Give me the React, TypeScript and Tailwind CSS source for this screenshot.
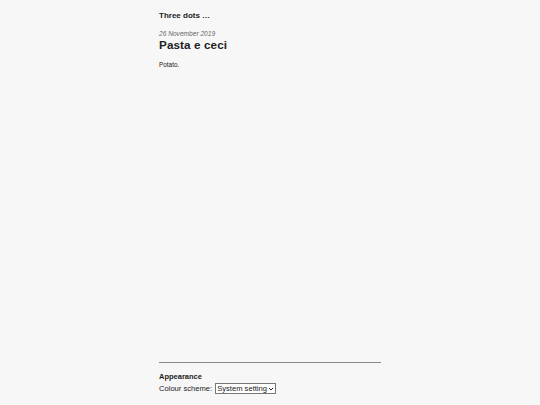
import React from 'react';

export default function App() {
  return (
    <div className="min-h-[405px] h-[405px] bg-[#f7f7f7] text-[#222] flex flex-col items-center font-['Liberation_Sans',Arial,sans-serif]">
      <div className="w-[222px] flex flex-col flex-1">
        <header className="pt-[10px]">
          <h1 className="text-[8px] leading-[12px] font-bold text-[#222]">Three dots …</h1>
        </header>

        <main className="flex-1 pt-[7px]">
          <p className="text-[6.6px] leading-[9px] italic text-[#666]">26 November 2019</p>
          <h2 className="text-[11.7px] leading-[14px] font-bold tracking-[0.1px] text-[#222]">Pasta e ceci</h2>
          <p className="text-[6.4px] leading-[9px] mt-[8px] text-[#222]">Potato.</p>
        </main>

        <footer className="pb-[11px]">
          <hr className="border-0 border-t border-[#888]" />
          <h3 className="text-[7.5px] leading-[10px] font-bold mt-[9px] text-[#222]">Appearance</h3>
          <div className="flex items-center gap-[3px] mt-[1px] text-[7.6px] leading-[10px] text-[#222]">
            <label>Colour scheme:</label>
            <div className="flex items-center border border-[#777] bg-white px-[1px] h-[11px]">
              <span>System setting</span>
              <svg width="6" height="6" viewBox="0 0 6 6" className="ml-[1px]">
                <path d="M1 2 L3 4 L5 2" fill="none" stroke="#222" strokeWidth="1" />
              </svg>
            </div>
          </div>
        </footer>
      </div>
    </div>
  );
}
